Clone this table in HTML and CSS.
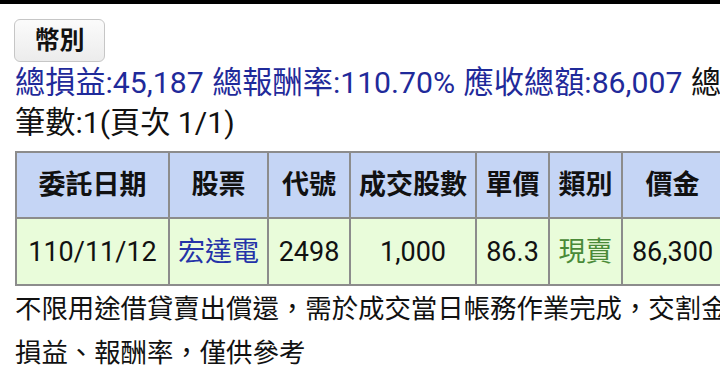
FILE: index.html
```html
<!DOCTYPE html>
<html lang="zh-Hant">
<head>
<meta charset="utf-8">
<title>損益</title>
<link rel="stylesheet" href="styles.css">
</head>
<body>
<div class="topbar"></div>
<main class="page">
  <button class="btn" type="button">幣別</button>
  <div class="summary"><span class="blue">總損益:45,187 總報酬率:110.70% 應收總額:86,007 </span>總成本:41,113</div>
  <div class="count">筆數:1(頁次 1/1)</div>
  <table class="grid">
    <colgroup>
      <col class="c1"><col class="c2"><col class="c3"><col class="c4"><col class="c5"><col class="c6"><col class="c7">
    </colgroup>
    <thead>
      <tr class="head">
        <th>委託日期</th><th>股票</th><th>代號</th><th>成交股數</th><th>單價</th><th>類別</th><th>價金</th>
      </tr>
    </thead>
    <tbody>
      <tr class="data">
        <td>110/11/12</td><td class="link">宏達電</td><td>2498</td><td>1,000</td><td>86.3</td><td class="sell">現賣</td><td>86,300</td>
      </tr>
    </tbody>
  </table>
  <p class="note">不限用途借貸賣出償還，需於成交當日帳務作業完成，交割金額<br>損益、報酬率，僅供參考</p>
</main>
</body>
</html>
```
FILE: styles.css
```css
html, body {
  margin: 0;
  padding: 0;
  overflow: hidden;
  background: #ffffff;
}
body {
  font-family: Roboto, "Noto Sans CJK TC", sans-serif;
  color: #111111;
  width: 720px;
}
.topbar {
  height: 4px;
  background: #000000;
}
.page {
  padding: 15px 0 0 14px;
  white-space: nowrap;
}
.btn {
  display: block;
  width: 91px;
  height: 43px;
  margin: 0 0 1px 0;
  padding: 0;
  border: 1px solid #c6c6c6;
  border-radius: 6px;
  background: linear-gradient(#fbfbfb, #ececec);
  font-family: Roboto, "Noto Sans CJK TC", sans-serif;
  font-size: 25px;
  font-weight: 700;
  color: #111111;
  line-height: 41px;
}
.summary, .count {
  font-size: 30.2px;
  line-height: 40px;
  padding-left: 1px;
}
.summary {
  word-spacing: 1px;
}
.blue {
  color: #1f2a9a;
}
.grid {
  margin-top: 8px;
  margin-left: 1px;
  border-collapse: collapse;
  table-layout: fixed;
  width: 707px;
  font-size: 27px;
}
.c1 { width: 153px; }
.c2 { width: 99px; }
.c3 { width: 82px; }
.c4 { width: 126px; }
.c5 { width: 73px; }
.c6 { width: 73px; }
.c7 { width: 101px; }
.grid th, .grid td {
  border: 2px solid #8c8c8c;
  text-align: center;
  padding: 0;
  line-height: 36px;
}
.head th {
  background: #c5d5f5;
  font-weight: 700;
  height: 64px;
  color: #111111;
}
.data td {
  background: #e9fcda;
  height: 65px;
  font-weight: 400;
}
.link {
  color: #2433a8;
}
.sell {
  color: #4a8a38;
}
.note {
  margin: 1px 0 0 1px;
  font-size: 26.4px;
  line-height: 44px;
  color: #111111;
}
```
